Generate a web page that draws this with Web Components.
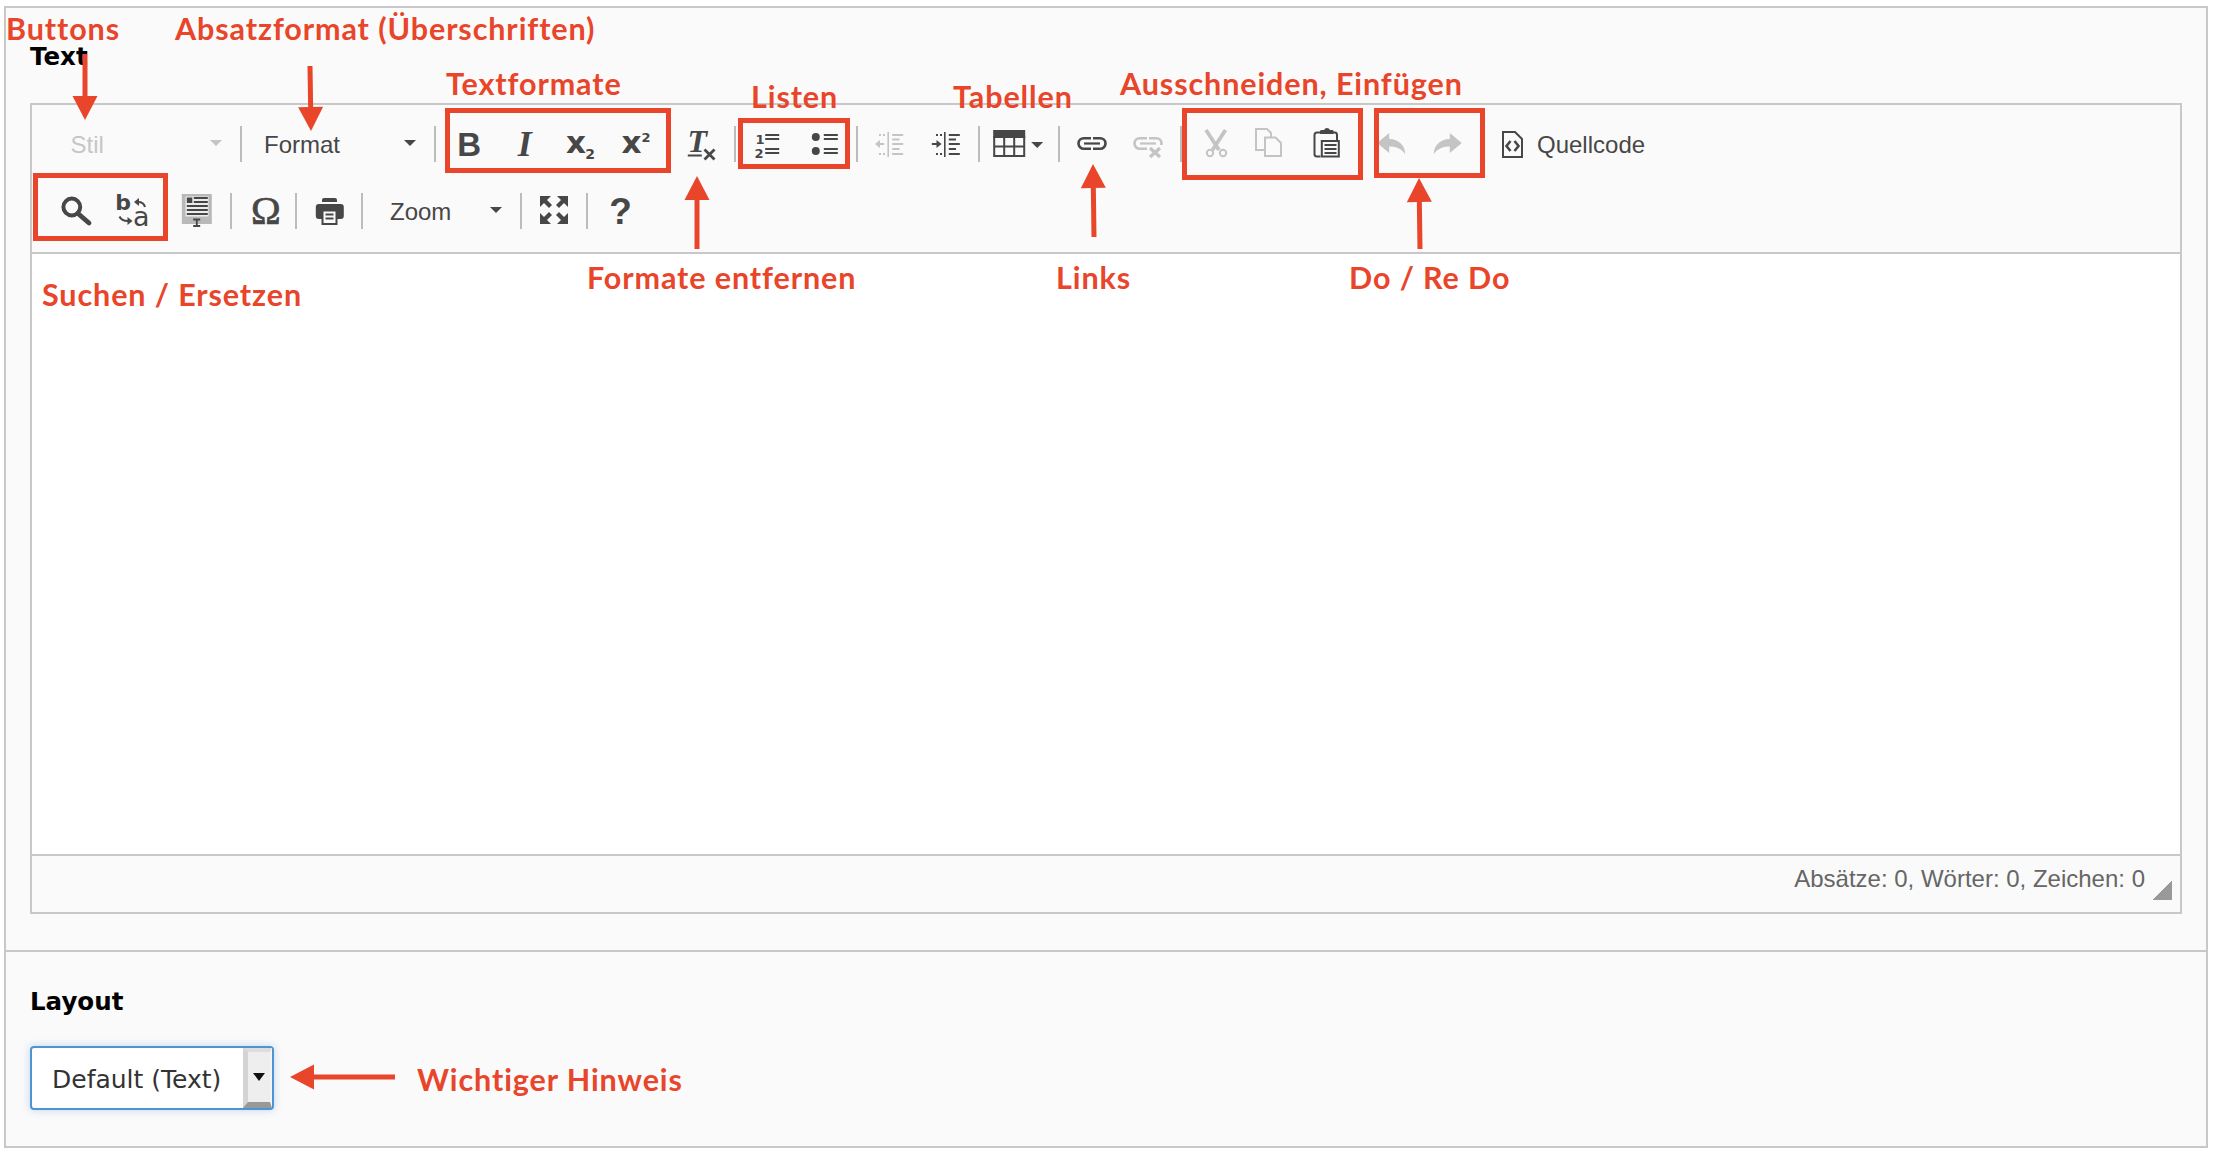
<!DOCTYPE html>
<html lang="de">
<head>
<meta charset="utf-8">
<title>Text</title>
<style>
    html, body { margin: 0; padding: 0; background: #fff; }
    body { width: 2214px; height: 1152px; position: relative; overflow: hidden; font-family: "Liberation Sans", Arial, sans-serif; }
</style>
</head>
<body>
<form-panel>
    <form-section label="Text" class="first">
        <rte-editor></rte-editor>
    </form-section>
    <form-section label="Layout" class="last">
        <layout-select value="Default (Text)"></layout-select>
    </form-section>
</form-panel>

<note-layer>
    <note-label x="6" y="28">Buttons</note-label>
    <note-label x="175" y="28">Absatzformat (Überschriften)</note-label>
    <note-label x="446" y="83">Textformate</note-label>
    <note-label x="751" y="96">Listen</note-label>
    <note-label x="953" y="96">Tabellen</note-label>
    <note-label x="1120" y="83">Ausschneiden, Einfügen</note-label>
    <note-label x="42" y="294">Suchen / Ersetzen</note-label>
    <note-label x="587" y="277">Formate entfernen</note-label>
    <note-label x="1056" y="277">Links</note-label>
    <note-label x="1349" y="277">Do / Re Do</note-label>
    <note-label x="417" y="1079">Wichtiger Hinweis</note-label>

    <note-box x1="445" y1="108" x2="671" y2="173"></note-box>
    <note-box x1="738" y1="118" x2="850" y2="169"></note-box>
    <note-box x1="33" y1="173" x2="168" y2="241"></note-box>
    <note-box x1="1182" y1="108" x2="1363" y2="180"></note-box>
    <note-box x1="1374" y1="108" x2="1485" y2="178"></note-box>

    <note-arrow x1="85" y1="54" x2="85" y2="120"></note-arrow>
    <note-arrow x1="310" y1="66" x2="311" y2="131"></note-arrow>
    <note-arrow x1="697" y1="249" x2="697" y2="176"></note-arrow>
    <note-arrow x1="1094" y1="237" x2="1093" y2="164"></note-arrow>
    <note-arrow x1="1420" y1="249" x2="1419" y2="178"></note-arrow>
    <note-arrow x1="395" y1="1077" x2="290" y2="1077"></note-arrow>
</note-layer>

<script>
const DARK = '#474747';
const GREY = '#c4c4c4';

// every icon is drawn around 0,0 = centre of its toolbar cell
const ICONS = {
    bold: `<text x="1.2" y="12" font-family="Liberation Sans" font-weight="700" font-size="33" text-anchor="middle" fill="${DARK}">B</text>`,
    italic: `<text x="0.8" y="12" font-family="Liberation Serif" font-weight="700" font-style="italic" font-size="36" text-anchor="middle" fill="${DARK}">I</text>`,
    sub: `<text x="-5" y="8.5" font-family="DejaVu Sans" font-weight="700" font-size="31" text-anchor="middle" fill="${DARK}">x</text>
          <text x="9" y="14.5" font-family="DejaVu Sans" font-weight="700" font-size="14" text-anchor="middle" fill="${DARK}">2</text>`,
    sup: `<text x="-5.5" y="8.5" font-family="DejaVu Sans" font-weight="700" font-size="31" text-anchor="middle" fill="${DARK}">x</text>
          <text x="9" y="-2" font-family="DejaVu Sans" font-weight="700" font-size="13" text-anchor="middle" fill="${DARK}">2</text>`,
    clear: `<text x="-5.8" y="8" font-family="Liberation Serif" font-weight="700" font-style="italic" font-size="32" text-anchor="middle" fill="${DARK}">T</text>
            <rect x="-15.2" y="10.5" width="14" height="2" fill="${DARK}"/>
            <path d="M1.5 5.5 L11.5 15.5 M11.5 5.5 L1.5 15.5" stroke="${DARK}" stroke-width="2.8" fill="none"/>`,
    ol: `<text x="-8" y="-0.5" font-family="DejaVu Sans" font-weight="700" font-size="13" text-anchor="middle" fill="${DARK}">1</text>
         <text x="-9" y="13.5" font-family="DejaVu Sans" font-weight="700" font-size="13" text-anchor="middle" fill="${DARK}">2</text>
         <path d="M-2.8 -9H11.2M-2.8 -5H11.2M-2.8 5H11.2M-2.8 9H11.2" stroke="${DARK}" stroke-width="1.8" fill="none"/>`,
    ul: `<circle cx="-9.2" cy="-7" r="4" fill="${DARK}"/><circle cx="-9.2" cy="7" r="4" fill="${DARK}"/>
         <path d="M-1.2 -9H12.8M-1.2 -5H12.8M-1.2 5H12.8M-1.2 9H12.8" stroke="${DARK}" stroke-width="1.8" fill="none"/>`,
    outdent: `<path d="M-1.8 -12V13" stroke="currentColor" stroke-width="1.6" fill="none"/>
              <path d="M-5.8 0H-11" stroke="currentColor" stroke-width="2" fill="none"/>
              <path d="M-15 0L-10 -4V4Z" fill="currentColor"/>
              <path d="M-11 -9H-9M-7 -9H-5M-11 10H-9M-7 10H-5" stroke="currentColor" stroke-width="2" fill="none"/>
              <path d="M2.2 -9H13.2M2.2 -4.5H9.5M2.2 0H13.2M2.2 5H9.5M2.2 10H13.2" stroke="currentColor" stroke-width="1.8" fill="none"/>`,
    indent: `<path d="M-2.2 -12V13" stroke="currentColor" stroke-width="1.6" fill="none"/>
             <path d="M-15.2 0H-10" stroke="currentColor" stroke-width="2" fill="none"/>
             <path d="M-5.5 0L-10.5 -4V4Z" fill="currentColor"/>
             <path d="M-11 -9H-9M-7 -9H-5M-11 10H-9M-7 10H-5" stroke="currentColor" stroke-width="2" fill="none"/>
             <path d="M1.8 -9H12.8M1.8 -4.5H9M1.8 0H12.8M1.8 5H9M1.8 10H12.8" stroke="currentColor" stroke-width="1.8" fill="none"/>`,
    table: `<rect x="-25.8" y="-14" width="32" height="8" fill="${DARK}"/>
            <path d="M-24.8 -8V12H5.2V-8M-24.8 2.5H5.2M-14.8 -8V12M-4.8 -8V12" stroke="${DARK}" stroke-width="2" fill="none"/>
            <path d="M12.2 -2H24.2L18.2 4Z" fill="${DARK}"/>`,
    link: `<path d="M-1 -5.8H-8.2A5.3 5.3 0 0 0 -8.2 4.8H-1M1 -5.8H8.2A5.3 5.3 0 0 1 8.2 4.8H1" stroke="${DARK}" stroke-width="2.6" fill="none"/>
           <path d="M-8 -0.5H8" stroke="${DARK}" stroke-width="2.2" fill="none"/>`,
    unlink: `<path d="M-1 -5.8H-8.2A5.3 5.3 0 0 0 -8.2 4.8H-1M1 -5.8H8.2A5.3 5.3 0 0 1 8.2 4.8H1" stroke="currentColor" stroke-width="2.6" fill="none"/>
             <path d="M-8 -0.5H8" stroke="currentColor" stroke-width="2.2" fill="none"/>
             <rect x="0" y="1" width="15" height="14" fill="#fafafa"/>
             <path d="M2 4L12 13M12 4L2 13" stroke="currentColor" stroke-width="3.4" fill="none"/>`,
    cut: `<path d="M-8 -14L5 6M11.5 -14L-1.5 6" stroke="currentColor" stroke-width="3.8" fill="none"/>
          <circle cx="-4" cy="9" r="3.2" stroke="currentColor" stroke-width="2" fill="#fafafa"/>
          <circle cx="9" cy="9" r="3.2" stroke="currentColor" stroke-width="2" fill="#fafafa"/>`,
    copy: `<path d="M-6 6H-14V-15H-3L1 -11V-7" stroke="currentColor" stroke-width="2" fill="none"/>
           <path d="M-5 -6.5H5.5L11 -1V12H-5Z" stroke="currentColor" stroke-width="2" fill="none"/>`,
    paste: `<path d="M-7 -11.5H-10Q-12.5 -11.5 -12.5 -9V10Q-12.5 12.5 -10 12.5H-6.5M5 -11.5H8Q10 -11.5 10 -9V-4" stroke="${DARK}" stroke-width="2" fill="none"/>
            <path d="M-7 -10V-13Q-7 -14 -5 -14H-3Q-2 -16 0 -16Q2 -16 3 -14H5Q6.5 -14 6.5 -13V-10Z" fill="${DARK}"/>
            <rect x="-5.2" y="-3" width="17" height="15.5" stroke="${DARK}" stroke-width="2" fill="none"/>
            <path d="M-2.5 1H9.5M-2.5 5H9.5M-2.5 9H9.5" stroke="${DARK}" stroke-width="1.8" fill="none"/>`,
    undo: `<path d="M-14.8 -1L-2.8 -11V-5C7 -5 13.2 2 13.2 10C9 4 3 2.5 -2.8 2.5V9Z" fill="currentColor"/>`,
    redo: `<path d="M12.8 -1L0.8 -11V-5C-9 -5 -15.2 2 -15.2 10C-11 4 -5 2.5 0.8 2.5V9Z" fill="currentColor"/>`,
    search: `<circle cx="-4.2" cy="-4" r="8.4" stroke="${DARK}" stroke-width="4" fill="none"/>
             <path d="M2 2.5L13 12" stroke="${DARK}" stroke-width="4.8" stroke-linecap="round" fill="none"/>`,
    replace: `<text x="-9.8" y="-1" font-family="DejaVu Sans" font-size="22" font-weight="700" text-anchor="middle" fill="${DARK}">b</text>
              <text x="8.2" y="14.5" font-family="DejaVu Sans" font-size="27" text-anchor="middle" fill="${DARK}">a</text>
              <path d="M5 -9C9 -9 11 -8 12 -4" stroke="${DARK}" stroke-width="2" fill="none"/>
              <path d="M1 -9L6 -13V-5Z" fill="${DARK}"/>
              <path d="M-13.5 5.5C-12 9 -9 10 -5 10" stroke="${DARK}" stroke-width="2" fill="none"/>
              <path d="M-0.5 10L-5.5 6V14Z" fill="${DARK}"/>`,
    selectall: `<rect x="-16.2" y="-17" width="30" height="30" fill="#b9b9b9"/>
                <rect x="-12.5" y="-14.5" width="23" height="20" fill="#ececec"/>
                <rect x="-11.2" y="-13.5" width="5.5" height="5.5" fill="${DARK}"/>
                <path d="M-4.2 -13H9.8M-4.2 -9H9.8M-11.2 -5H9.8M-11.2 -1H9.8M-11.2 3H9.8" stroke="${DARK}" stroke-width="1.8" fill="none"/>
                <path d="M-4.8 8.5H2.2M-1.2 8.5V15M-4.8 15H2.2" stroke="${DARK}" stroke-width="1.8" fill="none"/>`,
    omega: `<text x="1.8" y="13" font-family="Liberation Serif" font-size="40" stroke="${DARK}" stroke-width="0.7" text-anchor="middle" fill="${DARK}">Ω</text>`,
    print: `<path d="M-7 -9V-11Q-7 -13 -5 -13H6Q8 -13 8 -11V-9Z" fill="${DARK}"/>
            <rect x="-13.2" y="-7" width="28" height="15" rx="3" fill="${DARK}"/>
            <rect x="-6.5" y="-0.5" width="14" height="13.5" fill="#fafafa" stroke="${DARK}" stroke-width="2"/>
            <path d="M-3.5 3.5H4.5M-3.5 7.5H4.5" stroke="${DARK}" stroke-width="2" fill="none"/>`,
    maximize: `<g fill="${DARK}" stroke="${DARK}" transform="translate(0 -1)">
                 <g><path d="M-14 -14H-3L-14 -3Z" stroke="none"/><path d="M-9 -9L-3.5 -3.5" stroke-width="4.2" fill="none"/></g>
                 <g transform="scale(-1 1)"><path d="M-14 -14H-3L-14 -3Z" stroke="none"/><path d="M-9 -9L-3.5 -3.5" stroke-width="4.2" fill="none"/></g>
                 <g transform="scale(1 -1)"><path d="M-14 -14H-3L-14 -3Z" stroke="none"/><path d="M-9 -9L-3.5 -3.5" stroke-width="4.2" fill="none"/></g>
                 <g transform="scale(-1 -1)"><path d="M-14 -14H-3L-14 -3Z" stroke="none"/><path d="M-9 -9L-3.5 -3.5" stroke-width="4.2" fill="none"/></g>
               </g>`,
    help: `<text x="0.5" y="13" font-family="Liberation Sans" font-weight="700" font-size="37" text-anchor="middle" fill="${DARK}">?</text>`
};

class FormPanel extends HTMLElement {
    connectedCallback() {
        this.attachShadow({ mode: 'open' });
        this.shadowRoot.innerHTML = `
            <style>
                :host {
                    display: block;
                    margin: 6px 6px 0 4px;
                    border: 2px solid #c8c8c8;
                    background: #fafafa;
                    box-sizing: border-box;
                    height: 1142px;
                }
            </style>
            <slot></slot>
        `;
    }
}

class FormSection extends HTMLElement {
    connectedCallback() {
        this.attachShadow({ mode: 'open' });
        const first = this.classList.contains('first');
        this.shadowRoot.innerHTML = `
            <style>
                :host {
                    display: block;
                    padding: ${first ? '34px' : '35px'} 24px ${first ? '36px' : '0'} 24px;
                    ${first ? '' : 'border-top: 2px solid #c8c8c8;'}
                }
                .label {
                    font: 700 24.5px/30px "DejaVu Sans", Verdana, sans-serif;
                    color: #000;
                    margin-bottom: ${first ? '31px' : '29px'};
                }
            </style>
            <div class="label">${this.getAttribute('label')}</div>
            <slot></slot>
        `;
    }
}

class RteEditor extends HTMLElement {
    connectedCallback() {
        this.attachShadow({ mode: 'open' });
        this.shadowRoot.innerHTML = `
            <style>
                :host {
                    display: block;
                    border: 2px solid #c8c8c8;
                    background: #fafafa;
                }
                .toolbar {
                    box-sizing: content-box;
                    height: 141.5px;
                    padding: 5.5px 0 0 16px;
                    border-bottom: 2px solid #c8c8c8;
                }
                .row {
                    display: flex;
                    align-items: center;
                    height: 67px;
                }
                .first-row { margin-left: -1.5px; }
                .content { height: 600px; background: #fff; }
                .status {
                    height: 58px;
                    box-sizing: border-box;
                    border-top: 2px solid #c8c8c8;
                    display: flex;
                    justify-content: flex-end;
                    padding: 0 8px 0 0;
                    gap: 7px;
                    font-size: 24px;
                    line-height: 46px;
                    color: #666;
                }
                .grip {
                    width: 20px;
                    height: 20px;
                    margin-top: 24px;
                    background: linear-gradient(135deg, transparent 50%, #999 50%);
                }
            </style>
            <div class="toolbar">
                <div class="row first-row">
                    <rte-combo label="Stil" disabled width="188" pad="22" style="margin-left:2px"></rte-combo>
                    <rte-sep></rte-sep>
                    <rte-combo label="Format" width="185" pad="18.5"></rte-combo>
                    <rte-sep></rte-sep>
                    <rte-button icon="bold"></rte-button>
                    <rte-button icon="italic"></rte-button>
                    <rte-button icon="sub"></rte-button>
                    <rte-button icon="sup"></rte-button>
                    <rte-sep></rte-sep>
                    <rte-button icon="clear"></rte-button>
                    <rte-sep></rte-sep>
                    <rte-button icon="ol"></rte-button>
                    <rte-button icon="ul"></rte-button>
                    <rte-sep></rte-sep>
                    <rte-button icon="outdent" disabled></rte-button>
                    <rte-button icon="indent"></rte-button>
                    <rte-sep></rte-sep>
                    <rte-button icon="table" width="70.5"></rte-button>
                    <rte-sep></rte-sep>
                    <rte-button icon="link"></rte-button>
                    <rte-button icon="unlink" disabled></rte-button>
                    <rte-sep></rte-sep>
                    <rte-button icon="cut" disabled></rte-button>
                    <rte-button icon="copy" disabled></rte-button>
                    <rte-button icon="paste"></rte-button>
                    <rte-sep></rte-sep>
                    <rte-button icon="undo" disabled></rte-button>
                    <rte-button icon="redo" disabled></rte-button>
                    <rte-sep></rte-sep>
                    <rte-source-button>Quellcode</rte-source-button>
                </div>
                <div class="row">
                    <rte-button icon="search"></rte-button>
                    <rte-button icon="replace"></rte-button>
                    <rte-sep></rte-sep>
                    <rte-button icon="selectall"></rte-button>
                    <rte-sep></rte-sep>
                    <rte-button icon="omega"></rte-button>
                    <rte-sep></rte-sep>
                    <rte-button icon="print"></rte-button>
                    <rte-sep></rte-sep>
                    <rte-combo label="Zoom" width="150.5" pad="23.5"></rte-combo>
                    <rte-sep></rte-sep>
                    <rte-button icon="maximize"></rte-button>
                    <rte-sep></rte-sep>
                    <rte-button icon="help"></rte-button>
                </div>
            </div>
            <div class="content"></div>
            <div class="status">
                <span>Absätze: 0, Wörter: 0, Zeichen: 0</span>
                <div class="grip"></div>
            </div>
        `;
    }
}

class RteButton extends HTMLElement {
    connectedCallback() {
        this.attachShadow({ mode: 'open' });
        const disabled = this.hasAttribute('disabled');
        const width = this.getAttribute('width') || '56.5';
        this.shadowRoot.innerHTML = `
            <style>
                :host {
                    display: flex;
                    align-items: center;
                    justify-content: center;
                    flex: none;
                    width: ${width}px;
                    height: 48px;
                    color: ${disabled ? GREY : DARK};
                }
                svg { display: block; overflow: visible; }
            </style>
            <svg width="40" height="40" viewBox="-20 -20 40 40">${ICONS[this.getAttribute('icon')]}</svg>
        `;
    }
}

class RteSourceButton extends HTMLElement {
    connectedCallback() {
        this.attachShadow({ mode: 'open' });
        this.shadowRoot.innerHTML = `
            <style>
                :host {
                    display: flex;
                    align-items: center;
                    gap: 14px;
                    padding-left: 16px;
                    font-size: 24px;
                    color: ${DARK};
                }
                svg { display: block; }
                span { padding-top: 2px; }
            </style>
            <svg width="21" height="27" viewBox="0 0 21 27">
                <path d="M1 1H13L20 8V26H1Z" stroke="${DARK}" stroke-width="2" fill="none"/>
                <path d="M8.5 10L4.5 15L8.5 20M12.5 10L16.5 15L12.5 20" stroke="${DARK}" stroke-width="2.6" fill="none"/>
            </svg>
            <span><slot></slot></span>
        `;
    }
}

class RteCombo extends HTMLElement {
    connectedCallback() {
        this.attachShadow({ mode: 'open' });
        const disabled = this.hasAttribute('disabled');
        this.shadowRoot.innerHTML = `
            <style>
                :host {
                    display: flex;
                    align-items: center;
                    justify-content: space-between;
                    flex: none;
                    box-sizing: border-box;
                    width: ${this.getAttribute('width')}px;
                    height: 48px;
                    padding: 0 15px 0 ${this.getAttribute('pad')}px;
                    font-size: 24px;
                    color: ${disabled ? '#c6c6c6' : DARK};
                }
                span { padding-top: 2px; }
                .arrow {
                    width: 0;
                    height: 0;
                    border: 6px solid transparent;
                    border-top-color: ${disabled ? GREY : DARK};
                    border-bottom: 0;
                    margin-top: -3px;
                }
            </style>
            <span>${this.getAttribute('label')}</span>
            <div class="arrow"></div>
        `;
    }
}

class RteSep extends HTMLElement {
    connectedCallback() {
        this.attachShadow({ mode: 'open' });
        this.shadowRoot.innerHTML = `
            <style>
                :host {
                    display: block;
                    flex: none;
                    width: 2px;
                    height: 36px;
                    margin: 0 4px 0 3px;
                    background: #bcbcbc;
                }
            </style>
        `;
    }
}

class LayoutSelect extends HTMLElement {
    connectedCallback() {
        this.attachShadow({ mode: 'open' });
        this.shadowRoot.innerHTML = `
            <style>
                :host {
                    display: flex;
                    box-sizing: border-box;
                    width: 244px;
                    height: 64px;
                    border: 2px solid #4f93d2;
                    border-radius: 4px;
                    background: #fff;
                    box-shadow: 0 0 8px rgba(79, 147, 210, 0.35);
                }
                .value {
                    flex: 1;
                    padding-left: 20px;
                    font: 25px/63px "DejaVu Sans", Verdana, sans-serif;
                    color: #333;
                }
                .btn {
                    width: 22px;
                    background: #eee;
                    border-style: solid;
                    border-width: 4px 2px 6px 5px;
                    border-color: #ddd #f4f4f4 #999 #d4d4d4;
                    display: flex;
                    align-items: center;
                    justify-content: center;
                    margin-left: auto;
                }
                .arrow {
                    width: 0;
                    height: 0;
                    border: 6.5px solid transparent;
                    border-top: 8px solid #111;
                    border-bottom: 0;
                }
            </style>
            <div class="value">${this.getAttribute('value')}</div>
            <div class="btn"><div class="arrow"></div></div>
        `;
    }
}

class NoteLayer extends HTMLElement {
    connectedCallback() {
        this.attachShadow({ mode: 'open' });
        this.shadowRoot.innerHTML = `
            <style>
                :host {
                    display: block;
                    position: absolute;
                    left: 0;
                    top: 0;
                    width: 2214px;
                    height: 1152px;
                    pointer-events: none;
                }
            </style>
            <slot></slot>
        `;
    }
}

class NoteLabel extends HTMLElement {
    connectedCallback() {
        this.attachShadow({ mode: 'open' });
        this.shadowRoot.innerHTML = `
            <style>
                :host {
                    position: absolute;
                    left: ${this.getAttribute('x')}px;
                    top: ${this.getAttribute('y') - 14}px;
                    font: 700 30.5px/28px Lato, sans-serif;
                    letter-spacing: 0.9px;
                    color: #e8452a;
                    white-space: nowrap;
                }
            </style>
            <slot></slot>
        `;
    }
}

class NoteBox extends HTMLElement {
    connectedCallback() {
        this.attachShadow({ mode: 'open' });
        const x1 = +this.getAttribute('x1'), y1 = +this.getAttribute('y1');
        const x2 = +this.getAttribute('x2'), y2 = +this.getAttribute('y2');
        this.shadowRoot.innerHTML = `
            <style>
                :host {
                    position: absolute;
                    left: ${x1}px;
                    top: ${y1}px;
                    width: ${x2 - x1}px;
                    height: ${y2 - y1}px;
                    box-sizing: border-box;
                    border: 5px solid #e8452a;
                }
            </style>
        `;
    }
}

class NoteArrow extends HTMLElement {
    connectedCallback() {
        this.attachShadow({ mode: 'open' });
        const x1 = +this.getAttribute('x1'), y1 = +this.getAttribute('y1');
        const x2 = +this.getAttribute('x2'), y2 = +this.getAttribute('y2');
        const len = Math.hypot(x2 - x1, y2 - y1);
        const ux = (x2 - x1) / len, uy = (y2 - y1) / len;
        const bx = x2 - ux * 24, by = y2 - uy * 24;
        const hw = 12.5;
        const pts = `${x2},${y2} ${bx - uy * hw},${by + ux * hw} ${bx + uy * hw},${by - ux * hw}`;
        this.shadowRoot.innerHTML = `
            <style>
                :host { position: absolute; left: 0; top: 0; }
                svg { display: block; overflow: visible; }
            </style>
            <svg width="2214" height="1152">
                <line x1="${x1}" y1="${y1}" x2="${bx}" y2="${by}" stroke="#e8452a" stroke-width="5"/>
                <polygon points="${pts}" fill="#e8452a"/>
            </svg>
        `;
    }
}

customElements.define('form-panel', FormPanel);
customElements.define('form-section', FormSection);
customElements.define('rte-editor', RteEditor);
customElements.define('rte-button', RteButton);
customElements.define('rte-source-button', RteSourceButton);
customElements.define('rte-combo', RteCombo);
customElements.define('rte-sep', RteSep);
customElements.define('layout-select', LayoutSelect);
customElements.define('note-layer', NoteLayer);
customElements.define('note-label', NoteLabel);
customElements.define('note-box', NoteBox);
customElements.define('note-arrow', NoteArrow);
</script>
</body>
</html>
